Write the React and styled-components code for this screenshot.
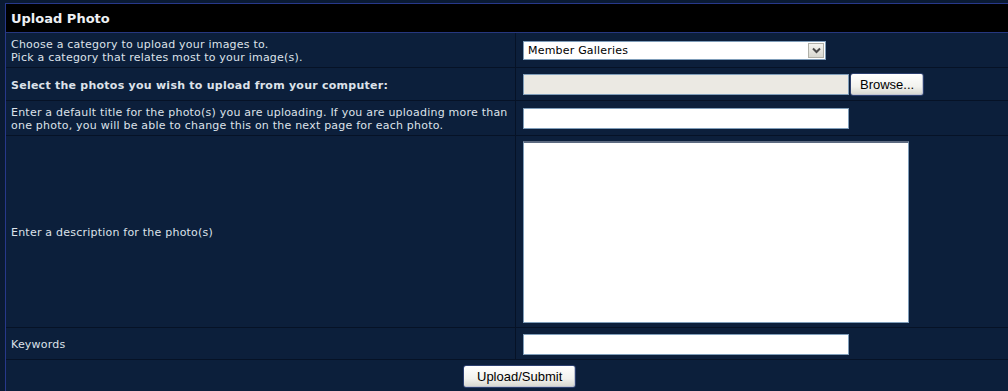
import React from "react";
import styled, { createGlobalStyle } from "styled-components";

const Global = createGlobalStyle`
  html, body { margin: 0; padding: 0; background: #0a1a33; overflow: hidden; }
  body { font-family: "DejaVu Sans", Verdana, sans-serif; }
`;

const Page = styled.div`
  width: 1008px;
  height: 391px;
  overflow: hidden;
  background: #0a1a33;
  padding: 3px 0 0 5px;
  box-sizing: border-box;
`;

const Panel = styled.div`
  width: 1020px;
  border: 1px solid #27388a;
  border-right: none;
  background: #071326;
`;

const Header = styled.div`
  height: 29px;
  background: #000;
  border-bottom: 1px solid #26377f;
  display: flex;
  align-items: center;
  padding: 1px 0 0 5px;
  box-sizing: border-box;
  color: #eef0f4;
  font-weight: bold;
  font-size: 13px;
`;

const Grid = styled.div`
  display: grid;
  grid-template-columns: 509px 1fr;
  row-gap: 1px;
  column-gap: 1px;
  background: #061226;
`;

const LabelCell = styled.div`
  background: #0c1f3b;
  color: #dde2ea;
  font-size: 11px;
  line-height: 13px;
  padding: 2px 5px 0;
  box-sizing: border-box;
  display: flex;
  align-items: center;
  height: ${(p) => p.$h}px;
  font-weight: ${(p) => (p.$bold ? "bold" : "normal")};
  letter-spacing: ${(p) => (p.$bold ? "0.25px" : "0.22px")};
`;

const FieldCell = styled.div`
  background: #0c1f3b;
  padding: 1px 0 0 7px;
  box-sizing: border-box;
  display: flex;
  align-items: center;
  height: ${(p) => p.$h}px;
`;

const SubmitRow = styled.div`
  grid-column: 1 / -1;
  background: #0c1f3b;
  height: 32px;
  display: flex;
  align-items: center;
  padding-left: 457px;
`;

const SelectBox = styled.div`
  width: 303px;
  height: 19px;
  box-sizing: border-box;
  background: #fff;
  border: 1px solid #7f9db9;
  display: flex;
  align-items: center;
  justify-content: space-between;
  font-size: 11px;
  letter-spacing: 0.2px;
  color: #000;
  padding-left: 4px;
`;

const SelectArrow = styled.div`
  width: 16px;
  height: 15px;
  margin-right: 1px;
  background: linear-gradient(#f4f4f0, #d8d8d0);
  border: 1px solid #b0b0a8;
  box-sizing: border-box;
  display: flex;
  align-items: center;
  justify-content: center;
`;

const TextInput = styled.div`
  width: 326px;
  height: 21px;
  background: ${(p) => (p.$disabled ? "#ebe9e3" : "#fff")};
  border: 1px solid #7f9db9;
  box-sizing: border-box;
`;

const TextArea = styled.div`
  width: 386px;
  height: 182px;
  background: #fff;
  border: 1px solid #7f9db9;
  border-top: 2px solid #5c6a80;
  box-sizing: border-box;
`;

const XPButton = styled.button`
  height: 23px;
  padding: 0 ${(p) => p.$pad}px;
  border: 1px solid #2c3f6e;
  border-radius: 3px;
  background: linear-gradient(#ffffff 0%, #f2f2ee 60%, #d6d6ce 100%);
  font-family: "Liberation Sans", Arial, sans-serif;
  font-size: 13px;
  color: #000;
  margin-left: ${(p) => p.$ml || 0}px;
  box-shadow: inset -1px -1px 0 #c0c4d0;
`;

const FileWrap = styled.div`
  display: flex;
  align-items: center;
`;

export default function App() {
  return (
    <>
      <Global />
      <Page>
        <Panel>
          <Header>Upload Photo</Header>
          <Grid>
            <LabelCell $h={34}>
              Choose a category to upload your images to.
              <br />
              Pick a category that relates most to your image(s).
            </LabelCell>
            <FieldCell $h={34}>
              <SelectBox>
                Member Galleries
                <SelectArrow>
                  <svg width="9" height="7" viewBox="0 0 9 7">
                    <path d="M1 1.5 L4.5 5 L8 1.5" stroke="#4a4a4a" strokeWidth="2" fill="none" />
                  </svg>
                </SelectArrow>
              </SelectBox>
            </FieldCell>

            <LabelCell $h={32} $bold>
              Select the photos you wish to upload from your computer:
            </LabelCell>
            <FieldCell $h={32}>
              <FileWrap>
                <TextInput $disabled />
                <XPButton $pad={9} $ml={1}>Browse...</XPButton>
              </FileWrap>
            </FieldCell>

            <LabelCell $h={34}>
              Enter a default title for the photo(s) you are uploading. If you are uploading more than
              one photo, you will be able to change this on the next page for each photo.
            </LabelCell>
            <FieldCell $h={34}>
              <TextInput />
            </FieldCell>

            <LabelCell $h={191}>Enter a description for the photo(s)</LabelCell>
            <FieldCell $h={191}>
              <TextArea />
            </FieldCell>

            <LabelCell $h={31}>Keywords</LabelCell>
            <FieldCell $h={31}>
              <TextInput />
            </FieldCell>

            <SubmitRow>
              <XPButton $pad={13}>Upload/Submit</XPButton>
            </SubmitRow>
          </Grid>
        </Panel>
      </Page>
    </>
  );
}
